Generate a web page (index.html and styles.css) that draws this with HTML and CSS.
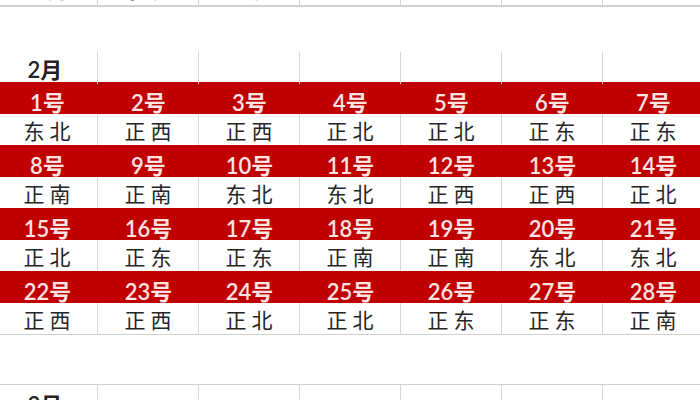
FILE: index.html
```html
<!DOCTYPE html>
<html lang="zh">
<head>
<meta charset="utf-8">
<link rel="stylesheet" href="styles.css">
</head>
<body>
<div class="sheet">
  <div class="row top">
    <div class="cell">正南</div><div class="cell">东北</div><div class="cell">正北</div><div class="cell"></div><div class="cell"></div><div class="cell"></div><div class="cell"></div>
  </div>
  <div class="gap"></div>
  <div class="row month">
    <div class="cell">2月</div><div class="cell"></div><div class="cell"></div><div class="cell"></div><div class="cell"></div><div class="cell"></div><div class="cell"></div>
  </div>
  <div class="row day"><div class="cell">1号</div><div class="cell">2号</div><div class="cell">3号</div><div class="cell">4号</div><div class="cell">5号</div><div class="cell">6号</div><div class="cell">7号</div></div>
  <div class="row dir"><div class="cell">东北</div><div class="cell">正西</div><div class="cell">正西</div><div class="cell">正北</div><div class="cell">正北</div><div class="cell">正东</div><div class="cell">正东</div></div>
  <div class="row day"><div class="cell">8号</div><div class="cell">9号</div><div class="cell">10号</div><div class="cell">11号</div><div class="cell">12号</div><div class="cell">13号</div><div class="cell">14号</div></div>
  <div class="row dir"><div class="cell">正南</div><div class="cell">正南</div><div class="cell">东北</div><div class="cell">东北</div><div class="cell">正西</div><div class="cell">正西</div><div class="cell">正北</div></div>
  <div class="row day"><div class="cell">15号</div><div class="cell">16号</div><div class="cell">17号</div><div class="cell">18号</div><div class="cell">19号</div><div class="cell">20号</div><div class="cell">21号</div></div>
  <div class="row dir"><div class="cell">正北</div><div class="cell">正东</div><div class="cell">正东</div><div class="cell">正南</div><div class="cell">正南</div><div class="cell">东北</div><div class="cell">东北</div></div>
  <div class="row day"><div class="cell">22号</div><div class="cell">23号</div><div class="cell">24号</div><div class="cell">25号</div><div class="cell">26号</div><div class="cell">27号</div><div class="cell">28号</div></div>
  <div class="row dir last"><div class="cell">正西</div><div class="cell">正西</div><div class="cell">正北</div><div class="cell">正北</div><div class="cell">正东</div><div class="cell">正东</div><div class="cell">正南</div></div>
  <div class="gap2"></div>
  <div class="row month next">
    <div class="cell">3月</div><div class="cell"></div><div class="cell"></div><div class="cell"></div><div class="cell"></div><div class="cell"></div><div class="cell"></div>
  </div>
</div>
</body>
</html>
```
FILE: styles.css
```css
html, body {
  margin: 0;
  padding: 0;
  background: #ffffff;
  overflow: hidden;
}
.sheet {
  width: 710px;
  margin-left: -3px;
  font-family: Lato, "Noto Sans CJK SC", sans-serif;
  font-size: 20px;
  color: #2a2a2a;
}
.row {
  display: grid;
  grid-template-columns: repeat(7, 101px);
}
.cell {
  display: flex;
  align-items: center;
  justify-content: center;
  border-right: 1px solid #d6d6d6;
  box-sizing: border-box;
  white-space: nowrap;
}
.top {
  height: 30px;
  margin-top: -25px;
  border-bottom: 2px solid #d0d0d0;
}
.top .cell {
  letter-spacing: 5px;
  color: #333;
}
.gap {
  height: 45px;
}
.month {
  height: 30px;
}
.month .cell {
  padding-right: 4px;
  font-size: 22px;
  font-weight: 600;
  color: #222;
}
.day {
  height: 32px;
  background: #c00000;
}
.day .cell {
  border-right: none;
  color: #ffe4e4;
  padding-top: 3px;
  font-size: 22px;
  font-weight: 600;
}
.dir {
  height: 31px;
}
.dir .cell {
  letter-spacing: 5px;
  padding-left: 5px;
  font-size: 21px;
  color: #262626;
}
.dir.last {
  border-bottom: 1px solid #d0d0d0;
}
.gap2 {
  height: 49px;
}
.next {
  border-top: 1px solid #d0d0d0;
}
.next .cell {
  padding-top: 2px;
}
```
